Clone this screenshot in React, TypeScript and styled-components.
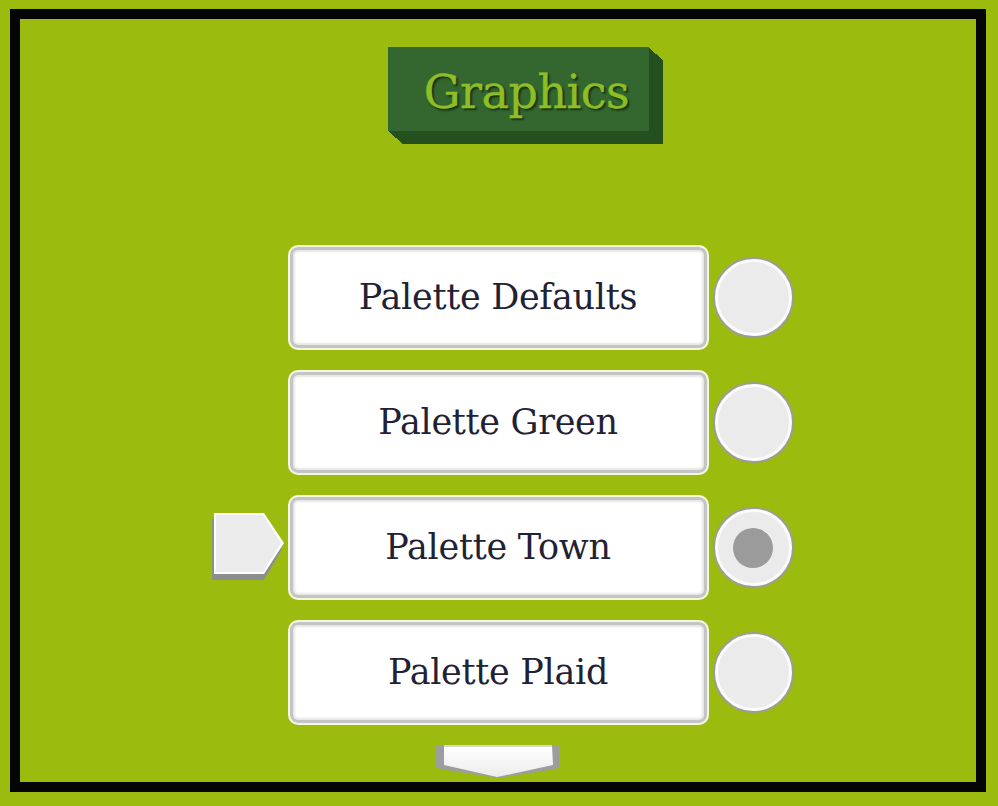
import React from "react";
import styled, { createGlobalStyle } from "styled-components";

const Global = createGlobalStyle`
  html, body { margin: 0; padding: 0; background: #9bbb0e; }
  body { width: 998px; height: 806px; overflow: hidden; }
`;

const bevel = Array.from({ length: 14 }, (_, i) => {
  const x = i + 1;
  const y = Math.round(((i + 1) * 13) / 14);
  return `${x}px ${y}px 0 #24501f`;
}).join(", ");

const Frame = styled.div`
  box-sizing: border-box;
  margin: 9px 0 0 10px;
  width: 976px;
  height: 783px;
  border: 10px solid #050505;
  background: #9bbb0e;
  display: flex;
  flex-direction: column;
  align-items: center;
  padding-top: 28px;
`;

const Title = styled.div`
  box-sizing: border-box;
  width: 261px;
  height: 84px;
  margin-left: 41px;
  background: #33672f;
  box-shadow: ${bevel};
  display: flex;
  align-items: center;
  justify-content: center;
  padding-left: 16px;
  padding-top: 6px;
  font-family: "DejaVu Serif", "Liberation Serif", serif;
  font-size: 46px;
  letter-spacing: -0.5px;
  color: #8fbd26;
  -webkit-text-stroke: 0.4px #8fbd26;
  text-shadow: 2px 2px 2px #16300f;
  margin-bottom: 114px;
`;

const List = styled.div`
  width: 100%;
  display: flex;
  flex-direction: column;
  gap: 20px;
`;

const Row = styled.div`
  display: grid;
  grid-template-columns: 1fr 421px 1fr;
  align-items: center;
`;

const Option = styled.div`
  box-sizing: border-box;
  grid-column: 2;
  height: 105px;
  border: 2px solid #f4f8de;
  border-radius: 10px;
  background: #ffffff;
  box-shadow: inset 0 0 0 3px #c4c4c4, inset 0 0 2px 5px #e6e6e6;
  display: flex;
  align-items: center;
  justify-content: center;
  font-family: "DejaVu Serif", "Liberation Serif", serif;
  font-size: 35px;
  letter-spacing: -0.3px;
  color: #1f2234;
  padding-bottom: 2px;
`;

const PointerCell = styled.div`
  grid-column: 1;
  justify-self: end;
  margin-right: 2px;
  margin-top: 0px;
  display: flex;
`;

const RadioCell = styled.div`
  grid-column: 3;
  justify-self: start;
  margin-left: 6px;
  display: flex;
`;

const Radio = styled.div<{ $on?: boolean }>`
  box-sizing: border-box;
  width: 77px;
  height: 77px;
  border-radius: 50%;
  background: #ebebeb;
  border: 3px solid #fbfbfb;
  box-shadow: 0 0 1px 2px #9c9c9c;
  display: flex;
  align-items: center;
  justify-content: center;
  &::after {
    content: "";
    display: ${(p) => (p.$on ? "block" : "none")};
    width: 40px;
    height: 40px;
    border-radius: 50%;
    background: #9b9b9b;
  }
`;

const More = styled.div`
  display: flex;
  justify-content: center;
  margin-top: 20px;
`;

const Pointer = () => (
  <svg width="74" height="70" viewBox="0 0 74 70">
    <polygon points="0,6 50,6 70,36 52,67 0,67" fill="#8e8e8e" />
    <polygon points="2,0 52,0 72,30 52,61 2,61" fill="#ffffff" />
    <polygon points="4,2 51,2 69,30 51,59 4,59" fill="#ebebeb" />
  </svg>
);

const DownArrow = () => (
  <svg width="124" height="34" viewBox="0 0 124 34">
    <defs>
      <linearGradient id="lg" x1="0" y1="0" x2="0" y2="1">
        <stop offset="0" stopColor="#ffffff" />
        <stop offset="1" stopColor="#ececec" />
      </linearGradient>
    </defs>
    <polygon points="0,0 124,0 124,22 120,24 62,33 4,24 0,22" fill="#9d9d9d" />
    <polygon points="8,1 116,1 117,20 61,32 8,20" fill="url(#lg)" />
    <rect x="8" y="0" width="108" height="2" fill="#d6d6d6" />
  </svg>
);

const options = [
  "Palette Defaults",
  "Palette Green",
  "Palette Town",
  "Palette Plaid",
];

export default function App() {
  const selected = 2;
  return (
    <>
      <Global />
      <Frame>
        <Title>Graphics</Title>
        <List>
          {options.map((o, i) => (
            <Row key={o}>
              {i === selected && (
                <PointerCell>
                  <Pointer />
                </PointerCell>
              )}
              <Option>{o}</Option>
              <RadioCell>
                <Radio $on={i === selected} />
              </RadioCell>
            </Row>
          ))}
        </List>
        <More>
          <DownArrow />
        </More>
      </Frame>
    </>
  );
}
